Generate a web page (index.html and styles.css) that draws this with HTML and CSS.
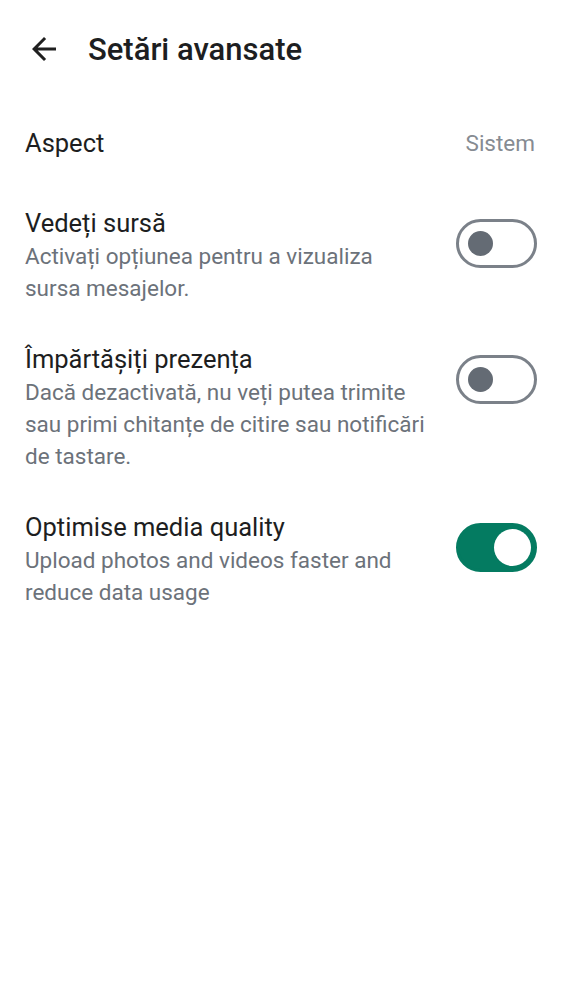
FILE: index.html
```html
<!DOCTYPE html>
<html lang="ro">
<head>
<meta charset="utf-8">
<title>Setări avansate</title>
<link rel="stylesheet" href="styles.css">
</head>
<body>
<header class="topbar">
  <button class="back" aria-label="Înapoi">
    <svg width="36" height="36" viewBox="0 0 24 24"><path d="M20 11H7.83l5.59-5.59L12 4l-8 8 8 8 1.41-1.41L7.83 13H20v-2z" fill="#1f1f1f"/></svg>
  </button>
  <h1 class="title">Setări avansate</h1>
</header>
<main class="list">
  <div class="row row-simple">
    <div class="label">Aspect</div>
    <div class="value">Sistem</div>
  </div>
  <div class="row">
    <div class="text">
      <div class="label">Vedeți sursă</div>
      <div class="desc">Activați opțiunea pentru a vizualiza sursa mesajelor.</div>
    </div>
    <div class="switch"><span class="thumb"></span></div>
  </div>
  <div class="row">
    <div class="text">
      <div class="label">Împărtășiți prezența</div>
      <div class="desc">Dacă dezactivată, nu veți putea trimite sau primi chitanțe de citire sau notificări de tastare.</div>
    </div>
    <div class="switch"><span class="thumb"></span></div>
  </div>
  <div class="row">
    <div class="text">
      <div class="label">Optimise media quality</div>
      <div class="desc">Upload photos and videos faster and reduce data usage</div>
    </div>
    <div class="switch on"><span class="thumb"></span></div>
  </div>
</main>
</body>
</html>
```
FILE: styles.css
```css
html, body {
  margin: 0;
  padding: 0;
  background: #ffffff;
}
body {
  font-family: Roboto, "Noto Sans", sans-serif;
  color: #1d1e21;
  width: 562px;
}
.topbar {
  display: flex;
  align-items: center;
  height: 98px;
  padding-left: 26px;
  box-sizing: border-box;
}
.back {
  border: 0;
  background: none;
  padding: 0;
  width: 36px;
  height: 36px;
  display: flex;
  align-items: center;
  justify-content: center;
  margin-right: 26px;
}
.title {
  margin: 0;
  font-size: 31px;
  font-weight: 500;
  color: #1d1e21;
  letter-spacing: 0;
}
.list {
  display: flex;
  flex-direction: column;
  padding-top: 28px;
}
.row {
  display: flex;
  align-items: flex-start;
  justify-content: space-between;
  padding: 0 25px 0 25px;
}
.row-simple {
  align-items: center;
  padding-right: 27px;
  padding-bottom: 46px;
}
.text {
  width: 407px;
  padding-bottom: 38px;
}
.label {
  font-size: 25.5px;
  line-height: 34px;
  color: #1d1e21;
}
.value {
  font-size: 22.5px;
  color: #868b92;
}
.desc {
  font-size: 22.5px;
  line-height: 32px;
  color: #6c727a;
}
.switch {
  flex: none;
  width: 81px;
  height: 49px;
  box-sizing: border-box;
  border: 3px solid #7b8189;
  border-radius: 25px;
  margin-top: 13px;
  display: flex;
  align-items: center;
  padding-left: 9px;
}
.thumb {
  width: 25px;
  height: 25px;
  border-radius: 50%;
  background: #646b74;
}
.switch.on {
  background: #047b61;
  border-color: #047b61;
  justify-content: flex-end;
  padding-left: 0;
  padding-right: 3px;
}
.switch.on .thumb {
  width: 37px;
  height: 37px;
  background: #ffffff;
}
```
